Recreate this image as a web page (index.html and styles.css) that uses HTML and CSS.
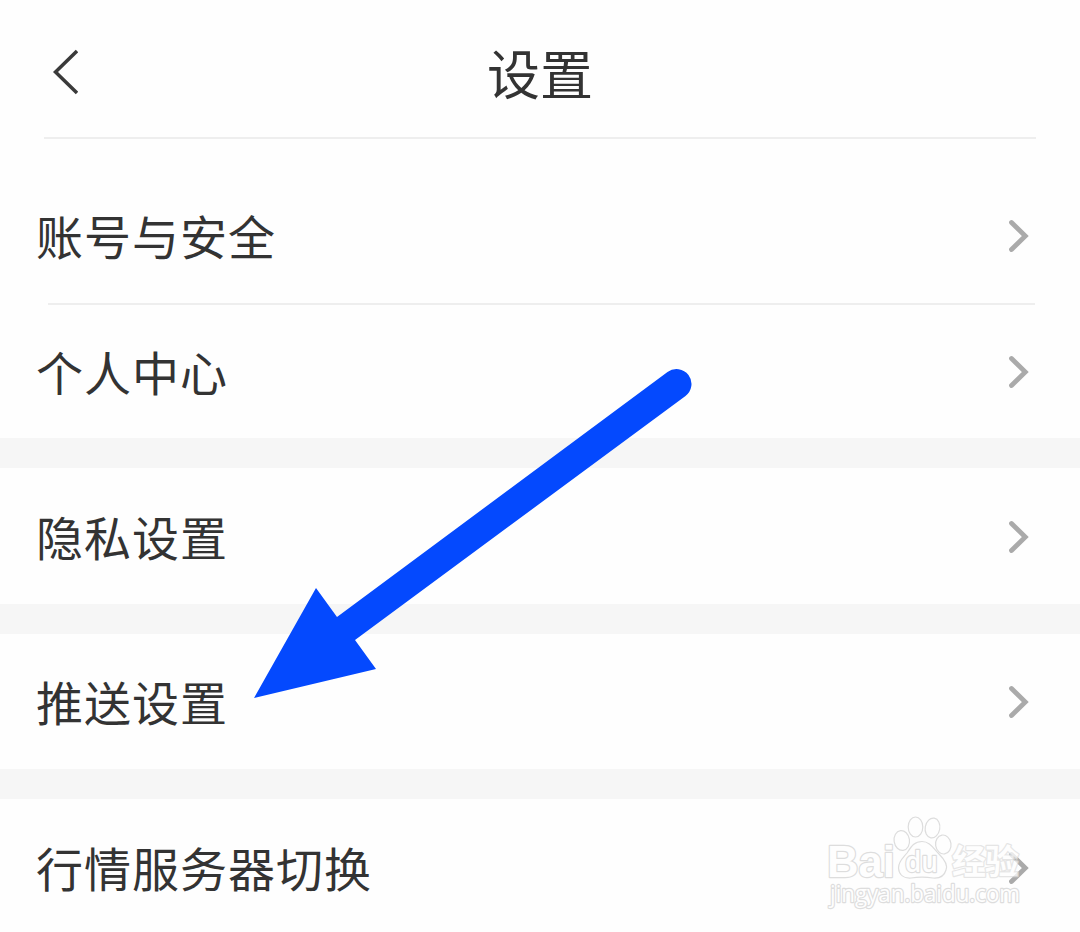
FILE: index.html
```html
<!DOCTYPE html>
<html lang="zh-CN">
<head>
    <meta charset="UTF-8">
    <meta name="viewport" content="width=device-width, initial-scale=1.0">
    <title>设置</title>
    <link rel="stylesheet" href="styles.css">
</head>
<body>
    <header class="top-bar">
        <svg class="back-icon" width="26" height="46" viewBox="0 0 26 46">
            <path d="M25 2 L3.5 23 L25 44" />
        </svg>
        <h1>设置</h1>
    </header>

    <main>
        <section class="group">
            <div class="row row-first">
                <span>账号与安全</span>
                <svg class="chevron" width="22" height="34" viewBox="0 0 22 34"><path d="M3.5 3.5 L17.3 17 L3.5 30.5" /></svg>
            </div>
            <div class="row row-divided">
                <span>个人中心</span>
                <svg class="chevron" width="22" height="34" viewBox="0 0 22 34"><path d="M3.5 3.5 L17.3 17 L3.5 30.5" /></svg>
            </div>
        </section>
        <section class="group">
            <div class="row">
                <span>隐私设置</span>
                <svg class="chevron" width="22" height="34" viewBox="0 0 22 34"><path d="M3.5 3.5 L17.3 17 L3.5 30.5" /></svg>
            </div>
        </section>
        <section class="group">
            <div class="row">
                <span>推送设置</span>
                <svg class="chevron" width="22" height="34" viewBox="0 0 22 34"><path d="M3.5 3.5 L17.3 17 L3.5 30.5" /></svg>
            </div>
        </section>
        <section class="group">
            <div class="row">
                <span>行情服务器切换</span>
                <svg class="chevron" width="22" height="34" viewBox="0 0 22 34"><path d="M3.5 3.5 L17.3 17 L3.5 30.5" /></svg>
            </div>
        </section>
    </main>

    <!-- Arrow pointing at the push settings row -->
    <svg class="arrow" width="440" height="332" viewBox="252 368 440 332">
        <path d="M254 698 L316 588 L337 617 L667.5 372 A15 15 0 0 1 685.5 396 L355 640 L376 669 Z" />
    </svg>

    <!-- Watermark -->
    <svg class="watermark" width="210" height="120" viewBox="824 812 210 120">
        <text class="wm-bai" x="827" y="877" textLength="68" lengthAdjust="spacingAndGlyphs">Bai</text>
        <ellipse cx="901.8" cy="840.5" rx="7.7" ry="10" transform="rotate(-8 901.8 840.5)" />
        <ellipse cx="915.5" cy="827" rx="7.3" ry="10" />
        <ellipse cx="932.5" cy="828" rx="7.3" ry="10" transform="rotate(10 932.5 828)" />
        <ellipse cx="943.3" cy="844.5" rx="7.7" ry="9.5" transform="rotate(-8 943.3 844.5)" />
        <path d="M922 841.5 C930 841.5 933 848 939 854 C945 860 948 865 946 870 C944 877 939 878.5 933 878 C926 877 918 877 911 878 C904 878.5 899 875 898.5 868 C898.5 861 903 858 907 853 C911 847 914 841.5 922 841.5 Z" />
        <text class="wm-du" x="905" y="872" textLength="33" lengthAdjust="spacingAndGlyphs">du</text>
        <text class="wm-cn" x="952" y="874" textLength="67">经验</text>
        <text class="wm-url" x="830" y="902" textLength="190" lengthAdjust="spacingAndGlyphs">jingyan.baidu.com</text>
    </svg>
</body>
</html>
```
FILE: styles.css
```css
* {
    box-sizing: border-box;
}

body {
    margin: 0;
    height: 932px;
    overflow: hidden;
    position: relative;
    background-color: #fefefe;
    color: #333;
    font-family: "Noto Sans CJK SC", sans-serif;
}

.top-bar {
    display: grid;
    grid-template-columns: 80px 1fr 80px;
    align-items: center;
    height: 139px;
    margin: 0 44px;
    padding-bottom: 10px;
    border-bottom: 2px solid #eee;
}

.back-icon {
    margin: 16px 0 0 8px;
}

.back-icon path {
    fill: none;
    stroke: #3a3a3a;
    stroke-width: 3.5;
}

h1 {
    margin: 17px 0 0;
    font-size: 53px;
    line-height: 60px;
    font-weight: 400;
    text-align: center;
}

main {
    display: flex;
    flex-direction: column;
    gap: 30px;
    background-color: #f6f6f6;
}

.group {
    background-color: #fefefe;
}

.row {
    display: flex;
    align-items: center;
    justify-content: space-between;
    height: 135.3px;
    padding: 2px 50px 0 36px;
}

.row span {
    font-size: 47px;
    line-height: 60px;
    letter-spacing: 1px;
    margin-bottom: 2px;
}

.row-first {
    height: 164px;
    padding-top: 30px;
}

.row-divided {
    background: linear-gradient(#eee, #eee) 48px 0 / 987px 2px no-repeat;
}

.chevron path {
    fill: none;
    stroke: #aaa;
    stroke-width: 4.8;
    stroke-linecap: round;
}

.arrow {
    position: absolute;
    left: 252px;
    top: 368px;
    fill: #0449fe;
}

.watermark {
    position: absolute;
    left: 824px;
    top: 812px;
    fill: #fefefe;
    stroke: #ddd;
    stroke-width: 1.2;
}

.watermark text {
    paint-order: stroke;
    stroke-width: 2.4;
    stroke-linejoin: round;
}

.wm-bai {
    font: 700 45px "Liberation Sans", sans-serif;
}

.wm-du {
    font: 600 28px "Open Sans", sans-serif;
}

.wm-cn {
    font: 700 34px "Noto Sans CJK SC", sans-serif;
    opacity: 0.75;
}

.wm-url {
    font: 400 23px "Open Sans", sans-serif;
}
```
